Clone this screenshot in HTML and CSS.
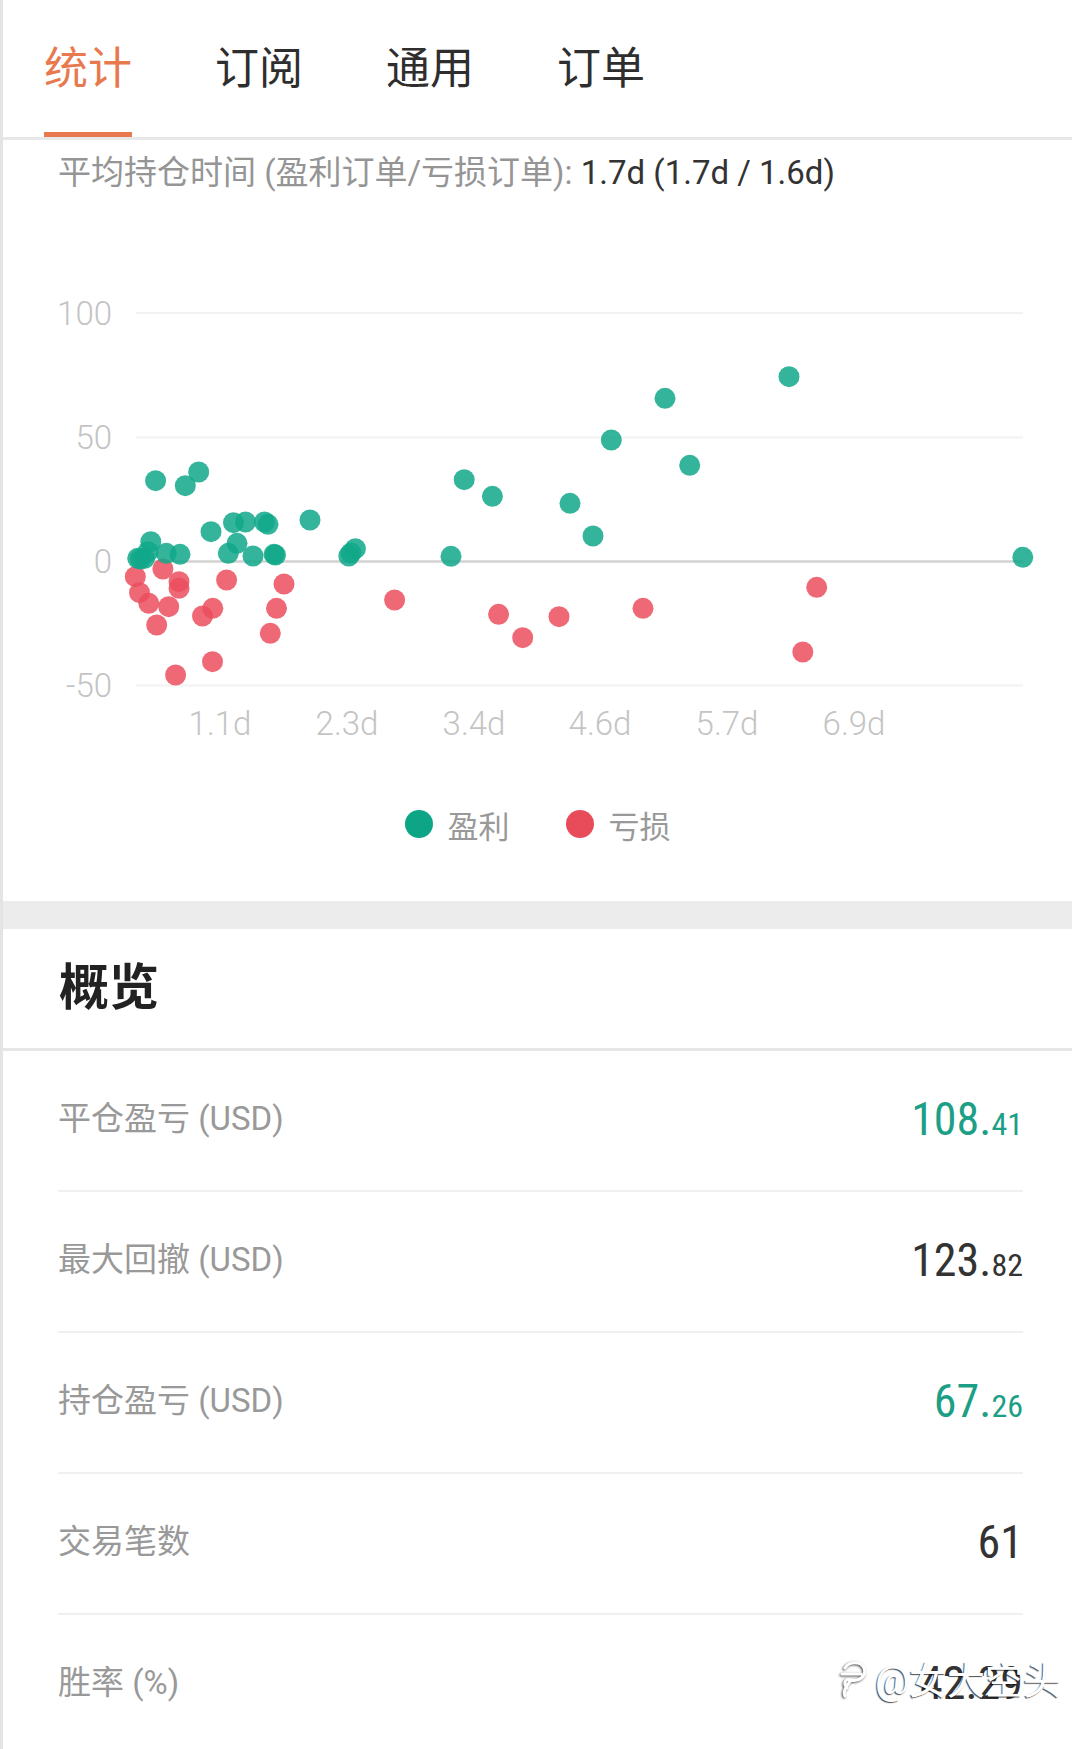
FILE: index.html
```html
<!DOCTYPE html>
<html lang="zh-CN">
  <head>
    <meta charset="UTF-8" />
    <meta name="viewport" content="width=device-width, initial-scale=1.0" />
    <title>统计</title>
    <link rel="stylesheet" href="styles.css">
  </head>
  <body>
    <div class="page">
      <nav class="tabs">
        <span class="tab active">统计</span>
        <span class="tab">订阅</span>
        <span class="tab">通用</span>
        <span class="tab">订单</span>
      </nav>

      <section class="chart-card">
        <p class="hold-time">平均持仓时间 (盈利订单/亏损订单): <span class="hold-value">1.7d (1.7d / 1.6d)</span></p>

        <!-- scatter: x = holding time, y = profit (USD) -->
        <svg class="scatter" viewBox="3 193 1069 567" width="1069" height="567">
          <g class="grid">
            <line x1="136" y1="313" x2="1023" y2="313" />
            <line x1="136" y1="437.5" x2="1023" y2="437.5" />
            <line x1="136" y1="685.5" x2="1023" y2="685.5" />
            <line class="zero" x1="136" y1="561.5" x2="1023" y2="561.5" />
          </g>
          <g class="axis-y">
            <text x="112" y="325">100</text>
            <text x="112" y="449">50</text>
            <text x="112" y="573">0</text>
            <text x="112" y="697">-50</text>
          </g>
          <g class="axis-x">
            <text x="220" y="735">1.1d</text>
            <text x="347" y="735">2.3d</text>
            <text x="474" y="735">3.4d</text>
            <text x="600" y="735">4.6d</text>
            <text x="727" y="735">5.7d</text>
            <text x="854" y="735">6.9d</text>
          </g>
          <g class="dots loss">
            <circle cx="135.3" cy="576.7" r="10.5" />
            <circle cx="139.5" cy="592.7" r="10.5" />
            <circle cx="148.8" cy="603.3" r="10.5" />
            <circle cx="156.7" cy="625" r="10.5" />
            <circle cx="162.9" cy="569" r="10.5" />
            <circle cx="168.7" cy="606.7" r="10.5" />
            <circle cx="179" cy="581.7" r="10.5" />
            <circle cx="179" cy="588.3" r="10.5" />
            <circle cx="175.6" cy="675" r="10.5" />
            <circle cx="202.5" cy="616" r="10.5" />
            <circle cx="212.8" cy="608.3" r="10.5" />
            <circle cx="212.5" cy="661.7" r="10.5" />
            <circle cx="226.6" cy="580" r="10.5" />
            <circle cx="270.3" cy="633.3" r="10.5" />
            <circle cx="276.5" cy="608.3" r="10.5" />
            <circle cx="284" cy="584" r="10.5" />
            <circle cx="394.6" cy="600" r="10.5" />
            <circle cx="498.6" cy="614.3" r="10.5" />
            <circle cx="522.7" cy="637.7" r="10.5" />
            <circle cx="559" cy="616.7" r="10.5" />
            <circle cx="643" cy="608.3" r="10.5" />
            <circle cx="816.7" cy="587.3" r="10.5" />
            <circle cx="802.8" cy="652" r="10.5" />
          </g>
          <g class="dots profit">
            <circle cx="137.7" cy="558.3" r="10.5" />
            <circle cx="140.5" cy="559" r="10.5" />
            <circle cx="144.6" cy="558.3" r="10.5" />
            <circle cx="150.8" cy="541.7" r="10.5" />
            <circle cx="148" cy="551.7" r="10.5" />
            <circle cx="155.6" cy="480.7" r="10.5" />
            <circle cx="166.3" cy="553.3" r="10.5" />
            <circle cx="180" cy="554.3" r="10.5" />
            <circle cx="185.3" cy="485.7" r="10.5" />
            <circle cx="198.7" cy="472" r="10.5" />
            <circle cx="211" cy="531.7" r="10.5" />
            <circle cx="228.3" cy="553.3" r="10.5" />
            <circle cx="233.5" cy="522.7" r="10.5" />
            <circle cx="237" cy="543.3" r="10.5" />
            <circle cx="245.5" cy="522" r="10.5" />
            <circle cx="253" cy="556" r="10.5" />
            <circle cx="264.5" cy="522" r="10.5" />
            <circle cx="268" cy="524.3" r="10.5" />
            <circle cx="274" cy="554.3" r="10.5" />
            <circle cx="275.5" cy="555" r="10.5" />
            <circle cx="310" cy="520" r="10.5" />
            <circle cx="348.8" cy="556" r="10.5" />
            <circle cx="351" cy="553" r="10.5" />
            <circle cx="355.4" cy="548.7" r="10.5" />
            <circle cx="451" cy="556.3" r="10.5" />
            <circle cx="464.2" cy="479.7" r="10.5" />
            <circle cx="492.4" cy="496.3" r="10.5" />
            <circle cx="570" cy="503.3" r="10.5" />
            <circle cx="593" cy="536" r="10.5" />
            <circle cx="611.3" cy="440" r="10.5" />
            <circle cx="665" cy="398.3" r="10.5" />
            <circle cx="689.7" cy="465.3" r="10.5" />
            <circle cx="789" cy="376.7" r="10.5" />
            <circle cx="1022.8" cy="557.3" r="10.5" />
          </g>
        </svg>

        <div class="legend">
          <span class="legend-item"><i class="legend-dot profit"></i>盈利</span>
          <span class="legend-item"><i class="legend-dot loss"></i>亏损</span>
        </div>
      </section>

      <div class="band"></div>

      <section class="overview">
        <h2 class="overview-title">概览</h2>
        <ul class="stat-list">
          <li class="stat-row">
            <span class="stat-label">平仓盈亏 (USD)</span>
            <span class="stat-value up">108.<small>41</small></span>
          </li>
          <li class="stat-row">
            <span class="stat-label">最大回撤 (USD)</span>
            <span class="stat-value">123.<small>82</small></span>
          </li>
          <li class="stat-row">
            <span class="stat-label">持仓盈亏 (USD)</span>
            <span class="stat-value up">67.<small>26</small></span>
          </li>
          <li class="stat-row">
            <span class="stat-label">交易笔数</span>
            <span class="stat-value">61</span>
          </li>
          <li class="stat-row">
            <span class="stat-label">胜率 (%)</span>
            <span class="stat-value">42.29</span>
          </li>
        </ul>
      </section>

      <div class="watermark">
        <svg class="watermark-logo" viewBox="0 0 30 40" width="30" height="40">
          <path d="M6 10 C10 3 22 3 25 10 C28 18 20 24 12 22 C6 20 4 26 8 30 M3 16 L22 16 M12 22 C6 30 4 34 6 38" />
        </svg>
        <span>@女大空头</span>
      </div>
    </div>
  </body>
</html>
```

FILE: styles.css
```css
body {
  font-family: Roboto, 'Noto Sans CJK SC', sans-serif;
  margin: 0;
  padding: 0;
  background-color: white;
}

.page {
  position: relative;
  width: 1069px;
  border-left: 3px solid #e4e4e4;
  min-height: 1749px;
}

/* Tabs */
.tabs {
  display: flex;
  gap: 83px;
  height: 137px;
  padding-left: 41px;
  border-bottom: 3px solid #e8e8e8;
}

.tab {
  position: relative;
  display: flex;
  align-items: center;
  padding-bottom: 7px;
  font-size: 44px;
  color: #2e2e2e;
}

.tab.active {
  color: #e8794f;
}

.tab.active::after {
  content: '';
  position: absolute;
  left: 0;
  right: 0;
  bottom: 0;
  height: 5px;
  background-color: #e8794f;
}

/* Chart */
.chart-card {
  padding: 13px 0 57px 0;
}

.hold-time {
  margin: 0;
  padding-left: 55px;
  font-size: 33px;
  line-height: 40px;
  color: #959595;
}

.hold-value {
  color: #333;
}

.scatter {
  display: block;
}

.grid line {
  stroke: #f2f2f2;
  stroke-width: 2;
}

.grid line.zero {
  stroke: #d2d2d2;
  stroke-width: 2.5;
}

.axis-y text,
.axis-x text {
  font-family: Roboto, sans-serif;
  font-weight: 300;
  font-size: 33px;
  fill: #c4c4c4;
}

.axis-y text {
  text-anchor: end;
}

.axis-x text {
  text-anchor: middle;
}

.dots.profit circle {
  fill: #10a889;
  fill-opacity: 0.85;
}

.dots.loss circle {
  fill: #eb4d5e;
  fill-opacity: 0.85;
}

.legend {
  display: flex;
  justify-content: center;
  gap: 56px;
  margin-top: 44px;
  height: 40px;
}

.legend-item {
  display: flex;
  align-items: center;
  gap: 15px;
  font-size: 31px;
  color: #999;
}

.legend-dot {
  width: 28px;
  height: 28px;
  border-radius: 50%;
}

.legend-dot.profit {
  background-color: #0ea486;
}

.legend-dot.loss {
  background-color: #e84b5a;
}

.band {
  height: 28px;
  background-color: #ececec;
}

/* Overview */
.overview-title {
  margin: 0;
  padding-left: 56px;
  height: 119px;
  line-height: 119px;
  font-size: 50px;
  font-weight: 700;
  color: #222;
  border-bottom: 3px solid #e6e6e6;
}

.stat-list {
  list-style: none;
  margin: 0 49px 0 55px;
  padding: 0;
}

.stat-row {
  display: flex;
  justify-content: space-between;
  align-items: center;
  height: 135px;
  padding-bottom: 4px;
  border-bottom: 2px solid #f0f0f0;
}

.stat-label {
  margin-bottom: 5px;
  font-size: 33px;
  color: #999;
}

.stat-value {
  font-family: 'Liberation Sans Narrow', 'Roboto Condensed', Roboto, sans-serif;
  font-size: 46px;
  color: #333;
}

.stat-value small {
  font-size: 32px;
}

.stat-value.up {
  color: #1d9f87;
}

/* Watermark over the last row */
.watermark {
  position: absolute;
  top: 1650px;
  left: 836px;
  display: flex;
  align-items: center;
  gap: 6px;
  font-size: 38px;
  color: white;
  text-shadow: -1px 1px 1px rgba(0, 0, 0, 0.7);
}

.watermark-logo path {
  fill: none;
  stroke: white;
  stroke-width: 3;
  stroke-linecap: round;
}

.watermark-logo {
  filter: drop-shadow(-1px 1px 1px rgba(0, 0, 0, 0.7));
}
```
